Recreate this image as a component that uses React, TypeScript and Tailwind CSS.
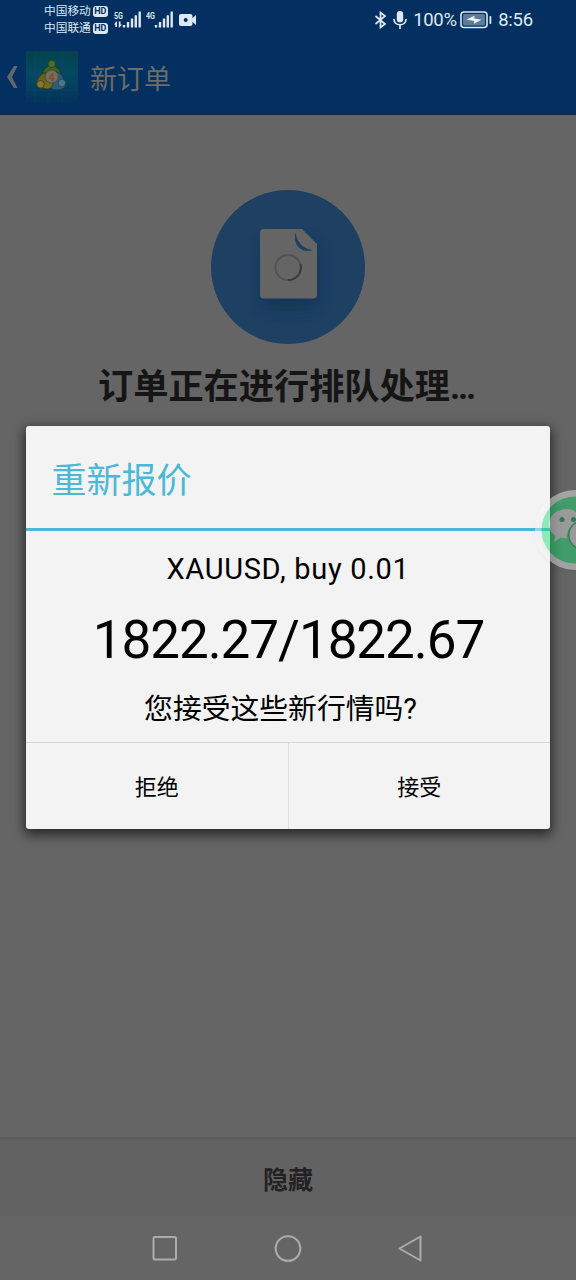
import { ReactNode } from 'react';

const FONT = "font-[Roboto,'Noto_Sans_CJK_SC',sans-serif]";

const CARRIERS = ['中国移动', '中国联通'];

function Signal({ label, arrows }: { label: string; arrows?: boolean }) {
  return (
    <svg width="28" height="20" viewBox="0 0 28 20" fill="#dfe8f2" className="shrink-0">
      <text x="0" y="8.5" fontSize="9.5" fontWeight="700" textLength="9" lengthAdjust="spacingAndGlyphs">
        {label}
      </text>
      {arrows && <path d="M2.200 11.500 0 14.500h1.300V17h1.700v-5.500zM4.800 11.500h1.700v3H8L5.500 17.500h-.7z" />}
      <rect x="8.800" y="15" width="2.400" height="2.600" rx=".5" />
      <rect x="12.800" y="12" width="2.400" height="5.600" rx=".5" />
      <rect x="16.800" y="8.500" width="2.400" height="9.100" rx=".5" />
      <rect x="20.600" y="5.200" width="2.400" height="12.400" rx=".5" />
      <rect x="24.500" y="1.500" width="2.400" height="16.100" rx=".5" />
    </svg>
  );
}

function StatusBar() {
  return (
    <div className="flex h-10 shrink-0 items-center pl-[44px] pr-[43px] text-[#dfe8f2]">
      <div className="flex flex-col">
        {CARRIERS.map(name => (
          <div key={name} className="flex h-[17px] items-center gap-[2px] text-[11.7px] leading-[17px]">
            <span>{name}</span>
            <span className="flex h-[11px] w-[15px] items-center justify-center rounded-[3px] bg-[#dfe8f2] text-[9px] font-bold leading-none text-[#033060]">
              HD
            </span>
          </div>
        ))}
      </div>
      <div className="ml-[6px] flex items-center gap-[4px]">
        <Signal label="5G" arrows />
        <Signal label="4G" />
        <svg width="18" height="14" viewBox="0 0 18 14" fill="#dfe8f2" className="ml-px">
          <path
            fillRule="evenodd"
            d="M2 1h9.500a2 2 0 0 1 2 2v8a2 2 0 0 1-2 2H2a2 2 0 0 1-2-2V3a2 2 0 0 1 2-2zm4.700 4a2 2 0 1 0 0 4 2 2 0 0 0 0-4z"
          />
          <path d="m12.500 6 4.500-4v10l-4.500-4z" />
        </svg>
      </div>

      <div className="ml-auto flex items-center">
        <svg width="13" height="18" viewBox="0 0 13 18" fill="none" stroke="#dfe8f2" strokeWidth="1.7">
          <path d="m1.500 5 9.500 8L6.500 16.500v-15L11 5l-9.500 8" />
        </svg>
        <svg width="14" height="18" viewBox="0 0 14 18" className="ml-[6px]">
          <rect x="3.800" y="0" width="6.400" height="11.500" rx="3.200" fill="#dfe8f2" />
          <path d="M1 8c0 3.500 2.500 5.800 6 5.800S13 11.500 13 8M7 13.800V18" fill="none" stroke="#dfe8f2" strokeWidth="1.700" />
        </svg>
        <span className="ml-[6px] w-[44px] whitespace-nowrap text-[18.5px] leading-none tracking-[-0.3px]">100%</span>
        <svg width="32" height="18" viewBox="0 0 32 18" className="ml-[3px]">
          <rect x="1" y="1" width="26" height="15.500" rx="3" fill="none" stroke="#dfe8f2" strokeWidth="1.600" />
          <rect x="3" y="3" width="22" height="11.500" rx="1.500" fill="#5d7b9b" />
          <path d="m6.500 8.500 8-3.700-.3 2.600 7.300 1.400-7.600 4 .2-2.800z" fill="#eef4fa" />
          <rect x="29.500" y="5" width="1.800" height="8" rx=".8" fill="#dfe8f2" />
        </svg>
        <span className="ml-[6px] text-[18.5px] leading-none tracking-[-0.2px]">8:56</span>
      </div>
    </div>
  );
}

function AppLogo() {
  return (
    <svg width="52" height="52" viewBox="0 0 52 52">
      <defs>
        <linearGradient id="sea" x1="0" y1="0" x2="0" y2="1">
          <stop offset="0" stopColor="#04424f" />
          <stop offset=".45" stopColor="#044862" />
          <stop offset="1" stopColor="#04335a" />
        </linearGradient>
        <linearGradient id="leaf" x1="0" y1="0" x2="0" y2="1">
          <stop offset="0" stopColor="#4c6a26" />
          <stop offset="1" stopColor="#1f4a1e" />
        </linearGradient>
        <linearGradient id="gold" x1="0" y1="0" x2="0" y2="1">
          <stop offset="0" stopColor="#5e5a1d" />
          <stop offset="1" stopColor="#7d6f20" />
        </linearGradient>
      </defs>
      <rect width="52" height="52" fill="url(#sea)" />
      <path d="M9 0v52M22 0v52M36 0v52M0 39h52" stroke="#1b6070" strokeWidth=".5" opacity=".3" />
      <path d="M16 27c-1-7 3-12 9.500-12S36 20 35.500 27c-2 2-5 2-8 2s-8 0-11.500-2z" fill="url(#leaf)" stroke="#12321e" strokeWidth=".8" />
      <path d="M30 21c5 1 8 5 7.500 9 3 3 3 7-1.500 8-5 2-11 1-13-3z" fill="#2d5d77" stroke="#12334d" strokeWidth=".8" />
      <path d="M14 25c2-3 6-4 8-2l5 10c-1 5-6 6-10 4-5 1-7-2-6-6 0-2 1-4 3-6z" fill="url(#gold)" stroke="#33331a" strokeWidth=".8" />
      <circle cx="25.700" cy="13" r="3.800" fill="#4f6e29" stroke="#1d3c1b" strokeWidth=".8" />
      <circle cx="14.500" cy="33.200" r="3.800" fill="#85792c" stroke="#3d3917" strokeWidth=".8" />
      <circle cx="35.800" cy="32" r="3.800" fill="#4b7688" stroke="#1d455c" strokeWidth=".8" />
      <circle cx="25.700" cy="25.500" r="6.500" fill="#716e64" stroke="#3a4637" strokeWidth=".6" />
      <text x="25.700" y="29.500" textAnchor="middle" fontSize="11" fontWeight="700" fill="#8a4b26">
        4
      </text>
    </svg>
  );
}

function Header() {
  return (
    <header className="flex h-[75px] shrink-0 items-center border-b border-[#092746]">
      <svg width="12" height="24" viewBox="0 0 12 24" className="ml-[6px]">
        <path d="M8 1h3.500L6 12l5.500 11H8L1 12z" fill="#60686c" />
      </svg>
      <div className="ml-[8px]">
        <AppLogo />
      </div>
      <h1 className="ml-[12px] pt-[5px] text-[27px] leading-[40px] text-[#6c6c68]">新订单</h1>
    </header>
  );
}

function OrderIcon() {
  return (
    <svg width="154" height="154" viewBox="0 0 154 154" className="block">
      <defs>
        <filter id="soft" x="-40%" y="-40%" width="180%" height="180%">
          <feGaussianBlur stdDeviation="7" />
        </filter>
      </defs>
      <circle cx="77" cy="77" r="77" fill="#1d4063" />
      <rect x="51" y="52" width="55" height="66" rx="6" fill="#0c2c50" opacity=".5" filter="url(#soft)" />
      <path d="M53 39h38l15 15v50.500a4 4 0 0 1-4 4H53a4 4 0 0 1-4-4V43a4 4 0 0 1 4-4z" fill="#656565" />
      <path d="M84.500 42.500C86 52 91 58.500 101.500 60c-4 1.500-9 1.200-13-2-4-3.500-5.500-9-4-15.500z" fill="#1d4063" />
      <circle cx="77" cy="77.500" r="12.500" fill="none" stroke="#525252" strokeWidth="1.800" />
      <path d="M89.500 74a12.500 12.500 0 0 1-12.500 16" fill="none" stroke="#3a3a3a" strokeWidth="1.800" />
    </svg>
  );
}

function DialogButton({ children }: { children: ReactNode }) {
  return <button className="flex-1 pt-[4px] text-[22px] leading-[32px] text-black">{children}</button>;
}

function RequoteDialog() {
  return (
    <div className="absolute left-[26px] top-[426px] flex h-[403px] w-[524px] flex-col rounded-[3px] bg-[#f3f3f3] shadow-[0_4px_12px_2px_rgba(0,0,0,0.6)]">
      <div className="flex h-[105px] shrink-0 items-center border-b-[3px] border-[#4bb9d6] pl-[25.5px] pt-[9px]">
        <h2 className="text-[35px] leading-[50px] text-[#4bb9d6]">重新报价</h2>
      </div>
      <div className="flex h-[212px] shrink-0 flex-col items-center border-b border-[#d6d6d6] text-black">
        <p className="mt-[18px] text-[29px] leading-[40px] tracking-[0.7px]">XAUUSD, buy 0.01</p>
        <p className="ml-px mt-[20px] text-[53px] leading-[62px] tracking-[-1.05px]">1822.27/1822.67</p>
        <p className="mr-[15px] mt-[17px] text-[28.8px] leading-[42px]">您接受这些新行情吗?</p>
      </div>
      <div className="flex flex-1 divide-x divide-[#dedede]">
        <DialogButton>拒绝</DialogButton>
        <DialogButton>接受</DialogButton>
      </div>
    </div>
  );
}

function ChatBubble() {
  return (
    <div className="absolute right-0 top-[482px] h-[96px] w-[49px] overflow-hidden">
      <svg width="49" height="96" viewBox="0 0 49 96">
        <defs>
          <filter id="halo" x="-20%" y="-20%" width="140%" height="140%">
            <feGaussianBlur stdDeviation="3" />
          </filter>
        </defs>
        <circle cx="48" cy="50" r="38" fill="#000" opacity=".06" filter="url(#halo)" />
        <g opacity=".42">
          <circle cx="48" cy="48" r="40" fill="#fff" />
          <circle cx="48" cy="48" r="33.500" fill="#1cf27c" />
          <path
            d="M40 27c-10 0-18 6.500-18 15 0 5 2.500 9 6.500 11.800L27 60l6.500-4.500c2 .6 4 .8 6 .8C40 46 45 41 55 41c-1-8-7-14-15-14z"
            fill="#eee"
          />
          <circle cx="56" cy="53" r="15" fill="#0fa552" />
          <circle cx="56" cy="53" r="13.500" fill="#eee" />
          <circle cx="35" cy="37.500" r="2.500" fill="#00964a" />
          <circle cx="46.500" cy="37.500" r="2.500" fill="#00964a" />
        </g>
      </svg>
    </div>
  );
}

function NavBar() {
  return (
    <nav className="flex h-[64px] shrink-0 items-center justify-between bg-[#656565] px-[151px]">
      <svg width="27" height="28" viewBox="0 0 27 28" fill="none" stroke="#acacac" strokeWidth="2">
        <rect x="2.500" y="3" width="22.500" height="22.500" rx="1.500" />
      </svg>
      <svg width="28" height="28" viewBox="0 0 28 28" fill="none" stroke="#acacac" strokeWidth="2">
        <circle cx="14" cy="14.500" r="12.300" />
      </svg>
      <svg width="28" height="28" viewBox="0 0 28 28" fill="none" stroke="#acacac" strokeWidth="2" strokeLinejoin="round">
        <path d="M23.500 2.500v24l-21-12z" />
      </svg>
    </nav>
  );
}

export default function App() {
  return (
    <div className={`relative flex h-[1280px] w-[576px] flex-col overflow-hidden bg-[#656565] ${FONT}`}>
      <div className="shrink-0 bg-[#033060]">
        <StatusBar />
        <Header />
      </div>

      <main className="flex flex-1 flex-col items-center pt-[75px]">
        <OrderIcon />
        <p className="mr-[4px] mt-[17px] text-[35.2px] font-bold leading-[52px] text-[#151515]">
          订单正在进行排队处理<span className="tracking-[-2.2px]">...</span>
        </p>
      </main>

      <button className="h-[79px] shrink-0 border-t-2 border-[#5b5b5b] bg-[#626262] pt-[6px] text-[25px] font-bold leading-[36px] text-[#222]">
        隐藏
      </button>
      <NavBar />

      <RequoteDialog />
      <ChatBubble />
    </div>
  );
}
